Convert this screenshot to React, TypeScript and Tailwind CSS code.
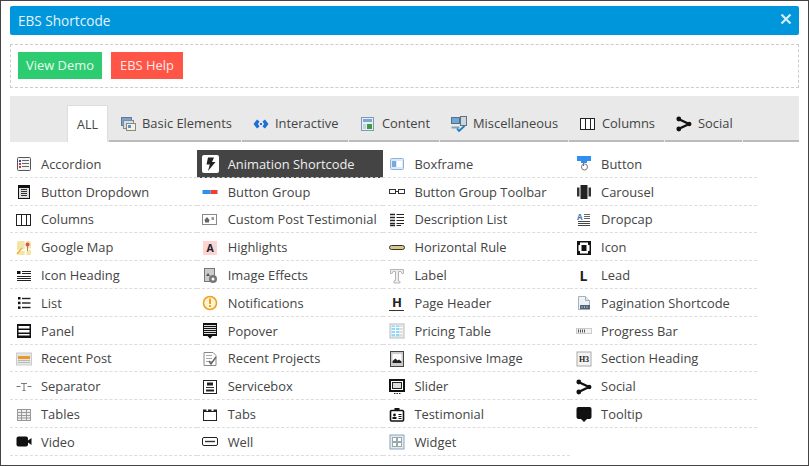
import type { ReactNode } from "react";

const Svg = ({ children, w = 16 }: { children: ReactNode; w?: number }) => (
  <svg width={w} height="16" viewBox={`0 0 ${w} 16`} className="block shrink-0">
    {children}
  </svg>
);

const lines = (ys: number[], x1: number, x2: number, color = "#222", sw = 1) =>
  ys.map((y) => <line key={y} x1={x1} x2={x2} y1={y} y2={y} stroke={color} strokeWidth={sw} />);

const socialIcon = (
  <Svg>
    <path d="M2.500 3L13 8L2.500 13" fill="none" stroke="#111" strokeWidth="2.400" />
    <circle cx="2.800" cy="3" r="2.400" fill="#111" />
    <circle cx="13.200" cy="8" r="2.200" fill="#111" />
    <circle cx="2.800" cy="13" r="2.400" fill="#111" />
  </Svg>
);

const columnsIcon = (
  <Svg>
    <rect x="0.500" y="2.500" width="14" height="11" fill="#fff" stroke="#222" />
    <path d="M5.500 3v10M10.500 3v10" stroke="#222" />
  </Svg>
);

const icons: Record<string, ReactNode> = {
  Accordion: (
    <Svg>
      <rect x="1.500" y="1.500" width="13" height="13" rx="1" fill="#f4f4f4" stroke="#555" />
      <rect x="3" y="4" width="2" height="2" fill="#3a4fa0" />
      <rect x="3" y="7" width="2" height="2" fill="#c04040" />
      <rect x="3" y="10" width="2" height="2" fill="#c04040" />
      {lines([4.500, 7.500, 10.500], 6, 13, "#666")}
    </Svg>
  ),
  Animation: (
    <svg width="17" height="18" viewBox="0 0 17 18" className="block shrink-0">
      <rect x="0" y="0" width="17" height="18" rx="2" fill="#fff" />
      <path d="M6 2.500h6L10 7h3.500L6 16l1.800-6.500H4.500z" fill="#222" />
    </svg>
  ),
  Boxframe: (
    <Svg>
      <rect x="1.500" y="2.500" width="13" height="11" rx="1" fill="#dce9f8" stroke="#8fb2dc" />
      <rect x="3" y="5" width="4" height="6" fill="#7aa8e0" />
      <rect x="8" y="5" width="5" height="6" fill="#fff" />
    </Svg>
  ),
  Button: (
    <Svg>
      <rect x="1" y="0" width="14" height="5" fill="#2e8fef" />
      <rect x="5" y="5" width="6" height="2" fill="#2e8fef" />
      <circle cx="8.500" cy="11" r="3" fill="#fff" stroke="#777" />
      <path d="M7.500 6v4" stroke="#777" />
    </Svg>
  ),
  "Button Dropdown": (
    <Svg>
      <rect x="2.500" y="1.500" width="11" height="13" fill="#ddd" stroke="#111" />
      <rect x="2" y="1" width="12" height="3" fill="#111" />
      {lines([5.500, 7.500, 9.500, 11.500], 5, 11, "#333")}
    </Svg>
  ),
  "Button Group": (
    <Svg>
      <rect x="0.500" y="6" width="8" height="4" fill="#2e8fef" />
      <rect x="8.500" y="6" width="7" height="4" fill="#ee4035" />
    </Svg>
  ),
  "Button Group Toolbar": (
    <Svg>
      <rect x="0.500" y="5.500" width="6" height="4" fill="#fff" stroke="#333" />
      <rect x="9.500" y="5.500" width="6" height="4" fill="#fff" stroke="#333" />
      <line x1="6" x2="10" y1="7.500" y2="7.500" stroke="#333" />
    </Svg>
  ),
  Carousel: (
    <Svg>
      <rect x="4.500" y="1" width="7" height="14" fill="#222" />
      <rect x="1" y="3.500" width="2.500" height="9" fill="#333" />
      <rect x="12.500" y="3.500" width="2.500" height="9" fill="#333" />
    </Svg>
  ),
  Columns: columnsIcon,
  "Custom Post Testimonial": (
    <Svg>
      <rect x="0.500" y="2.500" width="14" height="10" fill="#fff" stroke="#888" />
      <path d="M3 10.500h4V8.500h1L5 5 2 8.500h1z" fill="#666" />
      <rect x="9.500" y="5" width="2.500" height="3" fill="#999" />
    </Svg>
  ),
  "Description List": (
    <Svg>
      {lines([2.500, 5.500, 8.500, 11.500, 13.500], 1, 6, "#222", 1.500)}
      {lines([2.500, 5.500, 8.500, 11.500], 7.500, 15, "#222")}
      <line x1="7.500" x2="12" y1="13.500" y2="13.500" stroke="#222" />
    </Svg>
  ),
  Dropcap: (
    <Svg>
      <text x="1" y="8" fontSize="8" fill="#4a76b0" fontFamily="Open Sans, sans-serif" fontWeight="700">A</text>
      {lines([2.500, 4.500, 6.500], 8, 14, "#666")}
      {lines([9.500, 11.500, 13.500], 2, 14, "#444")}
    </Svg>
  ),
  "Google Map": (
    <Svg>
      <rect x="1" y="1" width="14" height="14" rx="1.500" fill="#f5e3a8" />
      <path d="M1 11L15 9M9.500 1v14" stroke="#fff" strokeWidth="1.500" />
      <path d="M1 14L6 8" stroke="#e6b93c" strokeWidth="1.500" />
      <circle cx="11.500" cy="4.500" r="2" fill="#d9534f" />
      <path d="M11.500 6v5" stroke="#b0863a" />
    </Svg>
  ),
  Highlights: (
    <Svg>
      <rect x="1" y="1" width="14" height="14" fill="#fcd4d4" />
      <text x="8" y="12" textAnchor="middle" fontSize="10.500" fontWeight="700" fill="#222" fontFamily="Open Sans, sans-serif">A</text>
    </Svg>
  ),
  "Horizontal Rule": (
    <Svg>
      <rect x="0.500" y="5.500" width="15" height="4" rx="2" fill="#d8c888" stroke="#333" />
    </Svg>
  ),
  Icon: (
    <Svg>
      <rect x="1" y="1" width="14" height="14" fill="#111" />
      <rect x="4" y="2.500" width="8" height="11" fill="#fff" />
      <rect x="2.500" y="5" width="11" height="6" fill="#fff" />
      <rect x="5.500" y="5" width="5" height="6" fill="#111" />
    </Svg>
  ),
  "Icon Heading": (
    <Svg>
      <rect x="1" y="3" width="3.500" height="3" fill="#111" />
      {lines([3.500, 5.500], 6, 15, "#222")}
      {lines([8.500, 10.500, 12.500], 1, 15, "#222")}
    </Svg>
  ),
  "Image Effects": (
    <Svg>
      <rect x="2.500" y="0.500" width="10" height="13" fill="#ccc" stroke="#777" />
      <path d="M4 8l2-3 2 3z" fill="#555" />
      <circle cx="11" cy="11" r="4" fill="#777" />
      <circle cx="11" cy="11" r="1.500" fill="#fff" />
    </Svg>
  ),
  Label: (
    <Svg>
      <path d="M1.500 1.500h13v4h-1.500l-1-2H9.500v9.500l1.500.500v1.500H5V13l1.500-.500V3.500H4l-1 2H1.500z" fill="#eee" stroke="#b5b5b5" />
    </Svg>
  ),
  Lead: (
    <span className="block h-4 text-center text-[14px] leading-4 font-bold text-[#222]">L</span>
  ),
  List: (
    <Svg>
      <rect x="2" y="2" width="2.500" height="2.500" fill="#111" />
      <rect x="2" y="6.700" width="2.500" height="2.500" fill="#111" />
      <rect x="2" y="11.400" width="2.500" height="2.500" fill="#111" />
      {lines([3.500, 8, 12.500], 6, 14.500, "#222", 1.400)}
    </Svg>
  ),
  Notifications: (
    <Svg>
      <circle cx="8" cy="8" r="6.500" fill="#fff4d8" stroke="#f0a020" strokeWidth="1.600" />
      <rect x="7" y="3.500" width="2" height="5.500" fill="#f0a020" />
      <rect x="7" y="10" width="2" height="2" fill="#f0a020" />
    </Svg>
  ),
  "Page Header": (
    <span className="block h-4 w-[15px] border-b border-[#333] text-center text-[13px] leading-[14px] font-bold text-[#222]">H</span>
  ),
  "Pagination Shortcode": (
    <Svg>
      <path d="M2.500 1.500h7l4 4v9h-11z" fill="#eef3f7" stroke="#a5b0b8" />
      <path d="M9.500 1.500v4h4" fill="#dde5eb" stroke="#a5b0b8" />
      <rect x="4" y="10" width="10" height="4" fill="#50657a" />
      <path d="M5.500 12h1M8 12h1M10.500 12h1" stroke="#fff" />
    </Svg>
  ),
  Panel: (
    <Svg>
      <rect x="1" y="1" width="14" height="14" fill="#111" />
      <rect x="2.500" y="3" width="11" height="2.500" fill="#fff" />
      <rect x="2.500" y="7" width="11" height="2.500" fill="#fff" />
      <rect x="2.500" y="11" width="11" height="1.500" fill="#fff" />
    </Svg>
  ),
  Popover: (
    <Svg>
      <rect x="1" y="0" width="14" height="13" fill="#111" />
      {lines([2.500, 4.500, 6.500, 8.500, 10.500], 2, 14, "#ddd")}
      <path d="M5.500 13h5L8 15.800z" fill="#111" />
    </Svg>
  ),
  "Pricing Table": (
    <Svg>
      <rect x="1" y="1" width="14" height="14" fill="#f2f2f2" stroke="#bbb" />
      <rect x="2.500" y="2.500" width="8" height="11" fill="#8fd8fa" />
      <rect x="10.500" y="2.500" width="3" height="11" fill="#ddd" />
      {lines([4.500, 7.500, 10.500], 2.500, 13.500, "#fff")}
      <path d="M6.500 2.500v11" stroke="#fff" />
    </Svg>
  ),
  "Progress Bar": (
    <Svg>
      <rect x="0.500" y="5.500" width="15" height="5" fill="#f2f2f2" stroke="#ccc" />
      <path d="M2.500 6.500v3M4.500 6.500v3M6.500 6.500v3M8.500 6.500v3" stroke="#555" />
    </Svg>
  ),
  "Recent Post": (
    <Svg>
      <rect x="0.500" y="2" width="15" height="12" fill="#e5e5e5" stroke="#ccc" />
      <rect x="2" y="5" width="12" height="3" fill="#e89a28" />
      {lines([9.500, 11.500], 2, 14, "#bbb")}
    </Svg>
  ),
  "Recent Projects": (
    <Svg>
      <path d="M2 1.500h9l3 3v10H2z" fill="#fff" stroke="#888" />
      {lines([4.500, 7.500, 10.500], 4, 10, "#aaa")}
      <path d="M7 10l2 3 5-7" fill="none" stroke="#666" strokeWidth="1.500" />
    </Svg>
  ),
  "Responsive Image": (
    <Svg>
      <rect x="1.500" y="0.500" width="13" height="15" fill="#ccc" stroke="#444" />
      <rect x="3.500" y="3" width="9" height="9" fill="#fff" />
      <path d="M3.500 12v-2l3-2.500 2 2 1.500-1 2.500 2V12z" fill="#222" />
    </Svg>
  ),
  "Section Heading": (
    <Svg>
      <rect x="1" y="1" width="14" height="14" fill="#f4f4f4" stroke="#aaa" />
      <text x="8" y="11" textAnchor="middle" fontSize="8" fontWeight="700" fill="#222" fontFamily="Liberation Serif, serif">H3</text>
    </Svg>
  ),
  Separator: (
    <Svg>
      <path d="M0.500 7.500h4M11.500 7.500h4" stroke="#777" />
      <path d="M5 4.500h6M8 4.500v7M6.500 11.500h3" stroke="#777" fill="none" />
    </Svg>
  ),
  Servicebox: (
    <Svg>
      <rect x="1.500" y="1.500" width="13" height="13" fill="#fff" stroke="#222" />
      <rect x="5" y="3.500" width="6" height="3" fill="#222" />
      <line x1="4" x2="12" y1="8.500" y2="8.500" stroke="#333" />
      <rect x="4" y="10.500" width="8" height="2" fill="#222" />
    </Svg>
  ),
  Slider: (
    <Svg>
      <rect x="1" y="1" width="14" height="11" fill="#fff" stroke="#111" strokeWidth="2" />
      <rect x="3.500" y="3.500" width="9" height="6" fill="#ddd" stroke="#222" />
      <path d="M5 14.500h1.500M7.500 14.500H9M10 14.500h1.500" stroke="#222" />
    </Svg>
  ),
  Social: socialIcon,
  Tables: (
    <Svg>
      <rect x="1.500" y="2.500" width="13" height="11" fill="#eee" stroke="#999" />
      {lines([5.500, 8.500, 11], 2, 14, "#999")}
      <path d="M5.500 3v10M10.500 3v10" stroke="#999" />
    </Svg>
  ),
  Tabs: (
    <Svg>
      <rect x="1.500" y="4.500" width="13" height="9" fill="#fff" stroke="#222" />
      <rect x="1" y="2.500" width="3.500" height="2.500" fill="#222" />
      <rect x="6" y="2.500" width="3.500" height="2.500" fill="#222" />
      <rect x="11.500" y="2.500" width="3.500" height="2.500" fill="#222" />
    </Svg>
  ),
  Testimonial: (
    <Svg>
      <rect x="1.500" y="3.500" width="13" height="10.500" rx="1" fill="#fff" stroke="#111" strokeWidth="1.600" />
      <rect x="5.500" y="1" width="5" height="3" fill="#111" />
      <circle cx="5.500" cy="8" r="1.400" fill="#111" />
      <rect x="3.500" y="10" width="4" height="2" fill="#111" />
      <path d="M9.500 7.500h3M9.500 9.500h3M9.500 11.500h3" stroke="#111" />
    </Svg>
  ),
  Tooltip: (
    <Svg>
      <rect x="0.500" y="0" width="15" height="12" rx="2" fill="#111" />
      <path d="M5 12h6L8 15z" fill="#111" />
    </Svg>
  ),
  Video: (
    <Svg>
      <rect x="0.500" y="2.500" width="11.500" height="10" rx="2" fill="#111" />
      <path d="M12 6.500l3.500-2.500v7L12 8.500z" fill="#111" />
    </Svg>
  ),
  Well: (
    <Svg>
      <rect x="0.500" y="3.500" width="15" height="8" rx="1.500" fill="#fff" stroke="#222" />
      <line x1="3" x2="13" y1="7.500" y2="7.500" stroke="#333" strokeWidth="1.400" />
    </Svg>
  ),
  Widget: (
    <Svg>
      <rect x="1" y="1" width="14" height="14" fill="#e3ebf3" stroke="#8ba4bf" />
      <rect x="3.500" y="3.500" width="4" height="4" fill="#fff" stroke="#9aa" />
      <rect x="8.500" y="3.500" width="4" height="4" fill="#fff" stroke="#9aa" />
      <rect x="3.500" y="8.500" width="4" height="4" fill="#fff" stroke="#9aa" />
      <rect x="8.500" y="8.500" width="4" height="4" fill="#fff" stroke="#9aa" />
    </Svg>
  ),
};

const rows = [
  "Accordion", "Animation Shortcode", "Boxframe", "Button",
  "Button Dropdown", "Button Group", "Button Group Toolbar", "Carousel",
  "Columns", "Custom Post Testimonial", "Description List", "Dropcap",
  "Google Map", "Highlights", "Horizontal Rule", "Icon",
  "Icon Heading", "Image Effects", "Label", "Lead",
  "List", "Notifications", "Page Header", "Pagination Shortcode",
  "Panel", "Popover", "Pricing Table", "Progress Bar",
  "Recent Post", "Recent Projects", "Responsive Image", "Section Heading",
  "Separator", "Servicebox", "Slider", "Social",
  "Tables", "Tabs", "Testimonial", "Tooltip",
  "Video", "Well", "Widget",
];

const tabs: { title: string; icon: ReactNode; width: string }[] = [
  {
    title: "Basic Elements",
    width: "w-[132px]",
    icon: (
      <Svg>
        <rect x="1.500" y="1.500" width="10" height="8" fill="#7fa3c8" stroke="#5e7a96" />
        <rect x="3.500" y="4.500" width="10" height="8" fill="#d5dfe8" stroke="#7b8c9c" />
        <rect x="6.500" y="7.500" width="9" height="7" fill="#f4f1e4" stroke="#8a8a7a" />
        <rect x="8" y="9" width="3" height="3" fill="#5b93c8" />
      </Svg>
    ),
  },
  {
    title: "Interactive",
    width: "w-[106px]",
    icon: (
      <Svg>
        <path d="M0.500 8l3.500-4.500 2.500 2L5 8l1.500 2.500-2.500 2z" fill="#1f6fd8" />
        <path d="M15.500 8L12 3.500l-2.500 2L11 8l-1.500 2.500 2.500 2z" fill="#1f6fd8" />
        <rect x="7" y="7" width="2" height="2" fill="#1f6fd8" />
      </Svg>
    ),
  },
  {
    title: "Content",
    width: "w-[90px]",
    icon: (
      <Svg>
        <rect x="1.500" y="1.500" width="12" height="13" fill="#e6eef6" stroke="#7f9ab8" />
        <rect x="3" y="3" width="9" height="3" fill="#7fa6d0" />
        <rect x="7" y="8" width="5" height="5" fill="#3f9a3f" />
        <rect x="3" y="8" width="3" height="5" fill="#c5d3e0" />
      </Svg>
    ),
  },
  {
    title: "Miscellaneous",
    width: "w-[128px]",
    icon: (
      <Svg>
        <rect x="0.500" y="1.500" width="8" height="6" fill="#6fa6d8" stroke="#52708a" />
        <rect x="9.500" y="0.500" width="6" height="9" fill="#ccd6de" stroke="#60727f" />
        <path d="M0.500 10.500h8v2h-8z" fill="#8aa0b2" />
        <path d="M6 12.500l2 2.500 5.500-5" fill="none" stroke="#1f7fc0" strokeWidth="1.800" />
      </Svg>
    ),
  },
  { title: "Columns", width: "w-[95px]", icon: columnsIcon },
  { title: "Social", width: "w-[77px]", icon: socialIcon },
];

export default function App() {
  return (
    <div className="w-[809px] h-[466px] overflow-hidden bg-white border border-[#444] px-[9px] pt-[5px] text-[12.900px] font-['Open_Sans',sans-serif]">
      <div className="h-[29px] rounded-[2px] bg-[#0096db] flex justify-between pl-2 pr-[7px] text-[13.600px] leading-[30px] text-[#e4f3fb]">
        <span>EBS Shortcode</span>
        <svg width="12" height="12" viewBox="0 0 12 12" className="mt-[7px]">
          <path d="M1.500 1.500l9 9M10.500 1.500l-9 9" stroke="#d7eefa" strokeWidth="2.200" />
        </svg>
      </div>

      <div className="mt-[9px] h-[44px] border border-dashed border-[#ccc] pl-[7px] pt-[7px] flex gap-[9px] text-[#e9fbf0]">
        <button className="w-[84px] h-[27px] pt-[1px] bg-[#2ecc71]">View Demo</button>
        <button className="w-[72px] h-[27px] pt-[1px] bg-[#ff5546] text-[#ffe9e6]">EBS Help</button>
      </div>

      <div className="mt-[8px] h-[46px] bg-[#e9e9e9] flex pl-[57px] text-[#444]">
        <div className="mt-[9px] w-[41px] h-[37px] bg-white border border-b-0 border-[#ddd] text-center leading-[38px] text-[12.500px]">
          ALL
        </div>
        <div className="flex flex-1 items-end">
          {tabs.map((tab) => (
            <div key={tab.title} className={`${tab.width} ml-[1px] h-[35px] flex items-center gap-[6px] pl-[11px] pt-[1px] border-b-2 border-[#bbb]`}>
              {tab.icon}
              <span>{tab.title}</span>
            </div>
          ))}
          <div className="flex-1 ml-[1px] h-[35px] border-b-2 border-[#bbb]" />
        </div>
      </div>

      <div className="mt-[8px] grid grid-cols-[repeat(4,186.7px)] auto-rows-[27.8px] text-[#444]">
        {rows.map((name) => {
          const active = name === "Animation Shortcode";
          return (
            <div
              key={name}
              className={`flex items-center gap-[10px] pl-[6px] pt-[2px] border-b border-dashed ${active ? "bg-[#444] text-[#eee] border-[#ccc]" : "border-[#ddd]"}`}
            >
              <span className="w-[15px] flex justify-center">{icons[active ? "Animation" : name]}</span>
              <span className="whitespace-nowrap">{name}</span>
            </div>
          );
        })}
      </div>
    </div>
  );
}
